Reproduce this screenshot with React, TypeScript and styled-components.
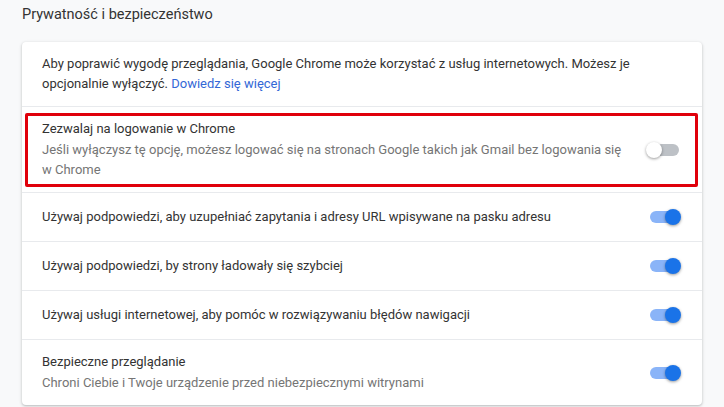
import React from "react";
import styled, { createGlobalStyle } from "styled-components";

const Global = createGlobalStyle`
  html, body {
    margin: 0;
    padding: 0;
    background: #f8f9fa;
    font-family: Roboto, "Noto Sans", "Liberation Sans", sans-serif;
    -webkit-font-smoothing: antialiased;
  }
`;

const Page = styled.div`
  width: 724px;
  height: 407px;
  overflow: hidden;
  padding: 0 22px;
  box-sizing: border-box;
`;

const SectionTitle = styled.h2`
  margin: 0;
  padding-top: 5px;
  height: 42px;
  box-sizing: border-box;
  font-size: 14.5px;
  line-height: 20px;
  font-weight: 400;
  color: #333333;
`;

const Card = styled.div`
  background: #ffffff;
  border-radius: 4px;
  box-shadow: 0 1px 2px rgba(60, 64, 67, 0.22), 0 1px 3px 1px rgba(60, 64, 67, 0.1);
`;

const Row = styled.div<{ $pad: number; $min?: number }>`
  position: relative;
  display: flex;
  align-items: center;
  gap: 20px;
  padding: ${(p) => p.$pad}px 20px ${(p) => p.$pad}px 20px;
  min-height: ${(p) => p.$min ?? 0}px;
  box-sizing: border-box;
  & + & {
    border-top: 1px solid #e8eaed;
  }
`;

const TextBlock = styled.div`
  flex: 1;
  min-width: 0;
`;

const Primary = styled.div`
  font-size: 13px;
  line-height: 20px;
  color: #333333;
`;

const Secondary = styled.div`
  font-size: 13px;
  line-height: 20px;
  color: #757575;
  margin-top: 1px;
`;

const Link = styled.a`
  color: #3367d6;
  text-decoration: none;
`;

const ToggleWrap = styled.div`
  position: relative;
  flex: none;
  width: 36px;
  height: 16px;
`;

const Track = styled.div<{ $on: boolean }>`
  position: absolute;
  left: 4px;
  top: 2px;
  width: 29px;
  height: 12px;
  border-radius: 6px;
  background: ${(p) => (p.$on ? "#8ab4f8" : "#bdc1c6")};
`;

const Knob = styled.div<{ $on: boolean }>`
  position: absolute;
  top: 0;
  left: ${(p) => (p.$on ? "19px" : "0px")};
  width: 16px;
  height: 16px;
  border-radius: 50%;
  background: ${(p) => (p.$on ? "#1a73e8" : "#ffffff")};
  box-shadow: 0 1px 3px rgba(0, 0, 0, 0.4);
`;

const Highlight = styled.div`
  position: absolute;
  left: 3px;
  right: 4px;
  top: 6px;
  bottom: 5px;
  border: 3px solid #e0000b;
  border-radius: 2px;
  pointer-events: none;
`;

const Toggle = ({ on }: { on: boolean }) => (
  <ToggleWrap>
    <Track $on={on} />
    <Knob $on={on} />
  </ToggleWrap>
);

const simpleRows = [
  "Używaj podpowiedzi, aby uzupełniać zapytania i adresy URL wpisywane na pasku adresu",
  "Używaj podpowiedzi, by strony ładowały się szybciej",
  "Używaj usługi internetowej, aby pomóc w rozwiązywaniu błędów nawigacji",
];

export default function App() {
  return (
    <>
      <Global />
      <Page>
        <SectionTitle>Prywatność i bezpieczeństwo</SectionTitle>
        <Card>
          <Row $pad={12}>
            <TextBlock>
              <Primary>
                Aby poprawić wygodę przeglądania, Google Chrome może korzystać z usług internetowych. Możesz je
              </Primary>
              <Primary>
                opcjonalnie wyłączyć. <Link href="#">Dowiedz się więcej</Link>
              </Primary>
            </TextBlock>
          </Row>
          <Row $pad={12}>
            <TextBlock>
              <Primary>Zezwalaj na logowanie w Chrome</Primary>
              <Secondary>
                Jeśli wyłączysz tę opcję, możesz logować się na stronach Google takich jak Gmail bez logowania się
                w Chrome
              </Secondary>
            </TextBlock>
            <Toggle on={false} />
            <Highlight />
          </Row>
          {simpleRows.map((t) => (
            <Row key={t} $pad={0} $min={49}>
              <TextBlock>
                <Primary>{t}</Primary>
              </TextBlock>
              <Toggle on />
            </Row>
          ))}
          <Row $pad={12}>
            <TextBlock>
              <Primary>Bezpieczne przeglądanie</Primary>
              <Secondary>Chroni Ciebie i Twoje urządzenie przed niebezpiecznymi witrynami</Secondary>
            </TextBlock>
            <Toggle on />
          </Row>
        </Card>
      </Page>
    </>
  );
}
